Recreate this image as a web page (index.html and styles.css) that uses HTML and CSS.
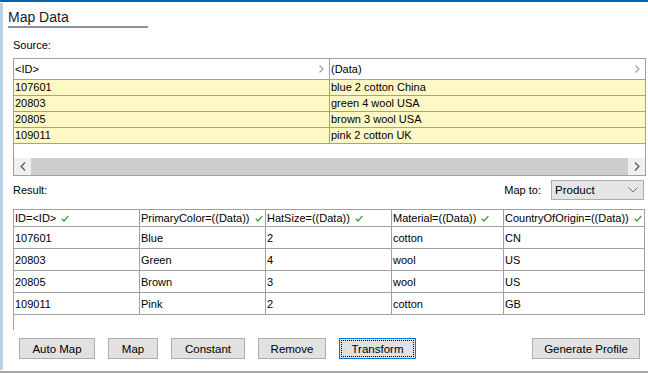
FILE: index.html
```html
<!DOCTYPE html>
<html lang="en">
<head>
    <meta charset="UTF-8">
    <title>Map Data</title>
    <link rel="stylesheet" href="styles.css">
</head>
<body>
    <div class="window">
        <div class="stripe"></div>
        <div class="content">
            <div class="title">Map Data</div>
            <div class="title-rule"></div>

            <div class="label source-label">Source:</div>
            <div class="source-grid">
                <div class="src-row src-head">
                    <div class="src-cell">&lt;ID&gt;<svg class="chev" width="5" height="8" viewBox="0 0 5 8"><polyline points="0.5,0.5 4,4 0.5,7.5" /></svg></div>
                    <div class="src-cell">(Data)<svg class="chev" width="5" height="8" viewBox="0 0 5 8"><polyline points="0.5,0.5 4,4 0.5,7.5" /></svg></div>
                </div>
                <div class="src-row"><div class="src-cell">107601</div><div class="src-cell">blue 2 cotton China</div></div>
                <div class="src-row"><div class="src-cell">20803</div><div class="src-cell">green 4 wool USA</div></div>
                <div class="src-row"><div class="src-cell">20805</div><div class="src-cell">brown 3 wool USA</div></div>
                <div class="src-row"><div class="src-cell">109011</div><div class="src-cell">pink 2 cotton UK</div></div>
                <div class="src-empty"></div>
                <div class="hscroll">
                    <div class="sb-btn"><svg width="6" height="9" viewBox="0 0 6 9"><polyline points="5,0.5 1.2,4.5 5,8.5" /></svg></div>
                    <div class="sb-thumb"></div>
                    <div class="sb-btn"><svg width="6" height="9" viewBox="0 0 6 9"><polyline points="1,0.5 4.8,4.5 1,8.5" /></svg></div>
                </div>
            </div>

            <div class="result-bar">
                <div class="label">Result:</div>
                <div class="map-to">
                    <span class="label">Map to:</span>
                    <div class="select">Product<svg width="10" height="6" viewBox="0 0 10 6"><polyline points="0.5,0.5 5,5 9.5,0.5" /></svg></div>
                </div>
            </div>

            <div class="result-grid">
                <div class="res-table">
                    <div class="res-cell head">ID=&lt;ID&gt;<svg class="tick" width="8" height="7" viewBox="0 0 8 7"><polyline points="0.8,3.8 3,6 7.4,0.8" /></svg></div>
                    <div class="res-cell head">PrimaryColor=((Data))<svg class="tick" width="8" height="7" viewBox="0 0 8 7"><polyline points="0.8,3.8 3,6 7.4,0.8" /></svg></div>
                    <div class="res-cell head">HatSize=((Data))<svg class="tick" width="8" height="7" viewBox="0 0 8 7"><polyline points="0.8,3.8 3,6 7.4,0.8" /></svg></div>
                    <div class="res-cell head">Material=((Data))<svg class="tick" width="8" height="7" viewBox="0 0 8 7"><polyline points="0.8,3.8 3,6 7.4,0.8" /></svg></div>
                    <div class="res-cell head">CountryOfOrigin=((Data))<svg class="tick" width="8" height="7" viewBox="0 0 8 7"><polyline points="0.8,3.8 3,6 7.4,0.8" /></svg></div>

                    <div class="res-cell">107601</div><div class="res-cell">Blue</div><div class="res-cell">2</div><div class="res-cell">cotton</div><div class="res-cell">CN</div>
                    <div class="res-cell">20803</div><div class="res-cell">Green</div><div class="res-cell">4</div><div class="res-cell">wool</div><div class="res-cell">US</div>
                    <div class="res-cell">20805</div><div class="res-cell">Brown</div><div class="res-cell">3</div><div class="res-cell">wool</div><div class="res-cell">US</div>
                    <div class="res-cell">109011</div><div class="res-cell">Pink</div><div class="res-cell">2</div><div class="res-cell">cotton</div><div class="res-cell">GB</div>
                </div>
            </div>

            <div class="buttons">
                <button class="btn w-auto">Auto Map</button>
                <button class="btn w-map">Map</button>
                <button class="btn w-const">Constant</button>
                <button class="btn w-remove">Remove</button>
                <button class="btn w-transform focused"><span>Transform</span></button>
                <button class="btn w-profile push-right">Generate Profile</button>
            </div>
        </div>
    </div>
</body>
</html>
```

FILE: styles.css
```css
body { margin: 0; width: 648px; height: 374px; background: #fff; font-family: "Liberation Sans", Arial, sans-serif; font-size: 11px; color: #000; overflow: hidden; }
.window { height: 373px; box-sizing: border-box; border-top: 2px solid #0063b1; border-bottom: 2px solid #a9a9a9; display: flex; }
.stripe { width: 3px; background: #b9d1ea; margin-top: 1px; margin-bottom: 1px; }
.content { flex: 1; display: flex; flex-direction: column; }

.title { padding: 6px 0 0 5px; font-size: 14px; line-height: 18px; color: #1a1a1a; }
.title-rule { margin-left: 5px; width: 140px; height: 2px; background: #8793a4; }

.label { line-height: 14px; }
.source-label { margin: 10px 0 6px 10px; }

.source-grid { margin-left: 10px; width: 633px; height: 118px; box-sizing: border-box; border: 1px solid #a0a0a0; display: flex; flex-direction: column; }
.src-row { display: grid; grid-template-columns: 316px 315px; height: 16px; box-sizing: border-box; border-bottom: 1px solid #a0a0a0; background: #fff8c5; }
.src-head { height: 21px; background: #fff; }
.src-cell { border-right: 1px solid #a0a0a0; padding-left: 1px; display: flex; align-items: center; justify-content: space-between; line-height: 15px; }
.src-cell:last-child { border-right: none; }
.chev { margin-right: 5px; fill: none; stroke: #a0a0a0; stroke-width: 1.2; }
.src-empty { flex: 1; }
.hscroll { height: 17px; display: flex; background: #f0f0f0; }
.sb-btn { width: 17px; display: flex; align-items: center; justify-content: center; }
.sb-btn svg { fill: none; stroke: #606060; stroke-width: 1.4; }
.sb-thumb { flex: 1; background: #cdcdcd; }

.result-bar { margin: 4px 4px 0 10px; height: 20px; display: flex; align-items: center; justify-content: space-between; }
.map-to { display: flex; align-items: center; gap: 10px; }
.select { width: 93px; height: 20px; box-sizing: border-box; border: 1px solid #acacac; background: #e5e5e5; display: flex; align-items: center; justify-content: space-between; padding: 0 5px 0 3px; font-size: 11.5px; }
.select svg { fill: none; stroke: #777; stroke-width: 1; }

.result-grid { margin: 9px 0 0 10px; height: 121px; width: 632px; box-sizing: border-box; border-left: 1px solid #a0a0a0; }
.res-table { display: grid; grid-template-columns: 126px 126px 126px 112px 141px; grid-template-rows: 17px repeat(4, 22px); border-top: 1px solid #a0a0a0; }
.res-cell { border-right: 1px solid #a0a0a0; border-bottom: 1px solid #a0a0a0; padding-left: 1px; display: flex; align-items: center; white-space: nowrap; overflow: hidden; }
.res-cell.head { line-height: 15px; }
.tick { margin-left: 5px; fill: none; stroke: #3e9a3e; stroke-width: 1.3; }

.buttons { margin: 8px 0 0 16px; display: flex; gap: 13px; padding-right: 8px; }
.btn { height: 21px; box-sizing: border-box; padding: 0; border: 1px solid #adadad; background: #e1e1e1; font-family: "Liberation Sans", Arial, sans-serif; font-size: 11.5px; color: #000; }
.w-auto { width: 76px; }
.w-map { width: 50px; }
.w-const { width: 74px; }
.w-remove { width: 68px; }
.w-transform { width: 77px; }
.w-profile { width: 108px; }
.push-right { margin-left: auto; }
.focused { border-color: #0078d7; padding: 1px; }
.focused span { display: flex; align-items: center; justify-content: center; height: 100%; box-sizing: border-box; border: 1px dotted #000; }
```
